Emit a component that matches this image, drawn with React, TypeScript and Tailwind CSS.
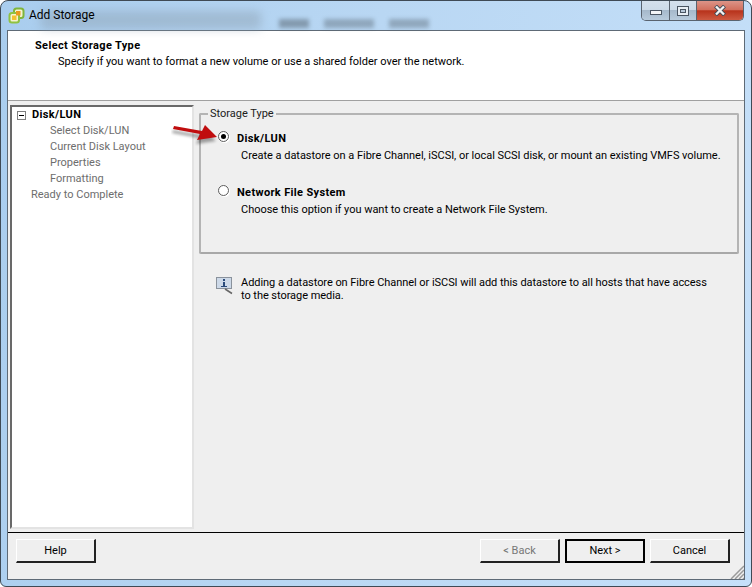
const font = { fontFamily: 'Roboto, sans-serif' };

function AppIcon() {
  return (
    <svg width="17" height="17" viewBox="0 0 17 17" className="shrink-0">
      <rect x="6" y="1.5" width="9.5" height="9.5" rx="2.5" fill="#f6f3cf" stroke="#7fb53a" strokeWidth="2" />
      <rect x="1.5" y="6" width="9.5" height="9.5" rx="2.5" fill="#f6f3cf" stroke="#8fc241" strokeWidth="2" />
      <rect x="4" y="8.5" width="4.5" height="4.5" fill="#f2c230" />
      <rect x="8" y="4" width="4.5" height="4.5" fill="#e89a1e" />
    </svg>
  );
}

function WindowControls() {
  return (
    <div className="flex h-[20px] w-[103px] shrink-0 rounded-b-[5px] border border-t-0 border-[#59636f] overflow-hidden">
      <div className="w-[28px] border-r border-[#59636f] bg-[linear-gradient(#d4e0ec_0%,#ccdae8_48%,#a6b9cb_50%,#b8cbdc_100%)] flex items-center justify-center">
        <div className="w-[12px] h-[5px] mt-[4px] bg-[#f4f6f8] border border-[#4a5562]" />
      </div>
      <div className="w-[27px] border-r border-[#59636f] bg-[linear-gradient(#d4e0ec_0%,#ccdae8_48%,#a6b9cb_50%,#b8cbdc_100%)] flex items-center justify-center">
        <div className="w-[12px] h-[10px] border border-[#4a5562] bg-[#e8eef4] flex items-center justify-center">
          <div className="w-[6px] h-[4px] border border-[#4a5562] bg-[#b8c8d8]" />
        </div>
      </div>
      <div className="flex-1 bg-[linear-gradient(#dc9488_0%,#d2705e_45%,#b8331c_52%,#cd5a42_100%)] flex items-center justify-center">
        <svg width="12" height="11" viewBox="0 0 12 11">
          <path d="M1.5 1 L10.5 10 M10.5 1 L1.5 10" stroke="#3d4a58" strokeWidth="4" />
          <path d="M2 1.5 L10 9.5 M10 1.5 L2 9.5" stroke="#f4f4f4" strokeWidth="2.4" />
        </svg>
      </div>
    </div>
  );
}

function TitleBar() {
  return (
    <div className="relative h-[29px] flex justify-between pl-[7px] pr-[7px] shrink-0">
      <div className="absolute left-[40px] top-[10px] w-[220px] h-[18px] bg-[#90a4b6] opacity-50 blur-[5px]" />
      <div className="absolute left-[278px] top-[18px] w-[30px] h-[9px] bg-[#52606c] opacity-50 blur-[2px]" />
      <div className="absolute left-[323px] top-[18px] w-[50px] h-[9px] bg-[#52606c] opacity-40 blur-[2px]" />
      <div className="absolute left-[388px] top-[18px] w-[40px] h-[9px] bg-[#52606c] opacity-40 blur-[2px]" />
      <div className="relative flex items-start gap-[4px] pt-[6px] text-[12px] leading-[17px] text-black">
        <AppIcon />
        <span>Add Storage</span>
      </div>
      <div className="relative">
        <WindowControls />
      </div>
    </div>
  );
}

function Header() {
  return (
    <div className="h-[70px] shrink-0 bg-white border-b border-[#a0a0a0] pl-[27px] pt-[7px]">
      <p className="text-[11px] leading-[16px] font-bold text-black tracking-[0.35px]">Select Storage Type</p>
      <p className="text-[11px] leading-[16px] pl-[23px] text-black">
        Specify if you want to format a new volume or use a shared folder over the network.
      </p>
    </div>
  );
}

function NavTree() {
  return (
    <div className="w-[184px] shrink-0 bg-white border-2 border-b-[#e3e3e3] border-r-[#e3e3e3] border-t-[#696969] border-l-[#696969] text-[11px] leading-[16px] text-[#6d6d6d]">
      <div className="flex items-center h-[16px] pl-[5px] gap-[6px]">
        <div className="w-[9px] h-[9px] border border-[#7f7f7f] flex items-center justify-center">
          <div className="w-[5px] h-[1px] bg-black" />
        </div>
        <span className="font-bold text-black tracking-[0.35px]">Disk/LUN</span>
      </div>
      <p className="pl-[38px]">Select Disk/LUN</p>
      <p className="pl-[38px]">Current Disk Layout</p>
      <p className="pl-[38px]">Properties</p>
      <p className="pl-[38px]">Formatting</p>
      <p className="pl-[19px]">Ready to Complete</p>
    </div>
  );
}

function Radio({ checked }: { checked?: boolean }) {
  return (
    <div className="w-[11px] h-[11px] mb-[6px] rounded-full border border-[#5c5c5c] bg-white shadow-[1px_1px_0_#fff] flex items-center justify-center shrink-0">
      {checked && <div className="w-[5px] h-[5px] rounded-full bg-black" />}
    </div>
  );
}

function Arrow() {
  return (
    <svg width="56" height="30" viewBox="0 0 56 30" className="absolute left-[-30px] top-0">
      <defs>
        <filter id="arrow-shadow" x="-20%" y="-40%" width="140%" height="180%">
          <feGaussianBlur stdDeviation="1.5" />
        </filter>
      </defs>
      <path
        d="M3 4 L31 9 L34 3 L46 15 L26 18 L29 12 L2 7 Z"
        fill="#000"
        opacity="0.35"
        filter="url(#arrow-shadow)"
        transform="translate(-1 4)"
      />
      <path d="M3 4 L31 9 L34 3 L46 15 L26 18 L29 12 L2 7 Z" fill="#c00d0e" />
    </svg>
  );
}

function StorageOption({ title, text, checked }: { title: string; text: string; checked?: boolean }) {
  return (
    <div>
      <div className="flex items-center gap-[8px] h-[16px]">
        <Radio checked={checked} />
        <span className="font-bold text-black tracking-[0.35px]">{title}</span>
      </div>
      <p className="pl-[23px] pt-[1px] text-black tracking-[-0.03px]">{text}</p>
    </div>
  );
}

function StorageType() {
  return (
    <fieldset className="relative h-[148px] mt-[1px] border-2 border-[#b4b4b4] border-b-[#a8a8a8] rounded-[2px] text-[11px] leading-[16px]">
      <legend className="ml-[7px] px-[2px] text-[#202020]">Storage Type</legend>
      <Arrow />
      <div className="flex flex-col gap-[21px] pt-[9px] pl-[17px]">
        <StorageOption
          checked
          title="Disk/LUN"
          text="Create a datastore on a Fibre Channel, iSCSI, or local SCSI disk, or mount an existing VMFS volume."
        />
        <StorageOption
          title="Network File System"
          text="Choose this option if you want to create a Network File System."
        />
      </div>
    </fieldset>
  );
}

function InfoNote() {
  return (
    <div className="flex gap-[7px] pl-[17px] pt-[22px] text-[11px] leading-[13px] text-black tracking-[-0.05px]">
      <svg width="18" height="18" viewBox="0 0 18 18" className="shrink-0 mt-[1px]">
        <rect x="0.5" y="0.5" width="15" height="11" fill="#cdd9e8" stroke="#8a929c" />
        <rect x="7" y="2" width="2" height="2" fill="#2a4a7a" />
        <rect x="7" y="5" width="2" height="4" fill="#2a4a7a" />
        <rect x="5" y="9" width="6" height="1" fill="#2a4a7a" />
        <path d="M9 12 L16 16.5" stroke="#666" strokeWidth="1.5" />
      </svg>
      <p className="w-[472px]">
        Adding a datastore on Fibre Channel or iSCSI will add this datastore to all hosts that have access to the storage media.
      </p>
    </div>
  );
}

function WizButton({ label, disabled, primary }: { label: string; disabled?: boolean; primary?: boolean }) {
  return (
    <button
      className={
        primary
          ? "w-[80px] h-[24px] pt-[1px] bg-[#efefef] border-2 border-black text-[11px] text-black"
          : "w-[80px] h-[24px] pt-[1px] bg-[#efefef] border border-t-white border-l-white border-r-2 border-b-2 border-r-[#222] border-b-[#222] text-[11px] " +
            (disabled ? "text-[#777]" : "text-black")
      }
    >
      {label}
    </button>
  );
}

function Footer() {
  return (
    <div className="relative h-[47px] shrink-0 border-t border-black flex items-start pt-[6px] pl-[8px] pr-[14px]">
      <WizButton label="Help" />
      <div className="flex-1" />
      <div className="flex gap-[5px]">
        <WizButton label="< Back" disabled />
        <WizButton label="Next >" primary />
        <WizButton label="Cancel" />
      </div>
      <svg width="14" height="14" viewBox="0 0 14 14" className="absolute right-0 bottom-0">
        <path d="M14 1 L1 14 M14 5 L5 14 M14 9 L9 14 M14 13 L13 14" stroke="#9a9a9a" strokeWidth="1.5" />
      </svg>
    </div>
  );
}

export default function App() {
  return (
    <div
      style={font}
      className="w-[752px] h-[587px] flex flex-col rounded-t-[8px] rounded-b-[6px] border border-[#3f4a55] bg-[linear-gradient(100deg,#a9cdee_0%,#b9d7f3_45%,#c6e0f9_100%)] overflow-hidden"
    >
      <TitleBar />
      <div className="flex-1 mx-[6px] mb-[6px] flex flex-col bg-[#efefef] border border-[#5e6a76] min-h-0">
        <Header />
        <div className="flex-1 flex min-h-0 pl-[2px] pt-[4px] pb-[3px] gap-[5px]">
          <NavTree />
          <div className="flex-1 pr-[5px]">
            <StorageType />
            <InfoNote />
          </div>
        </div>
        <Footer />
      </div>
    </div>
  );
}
